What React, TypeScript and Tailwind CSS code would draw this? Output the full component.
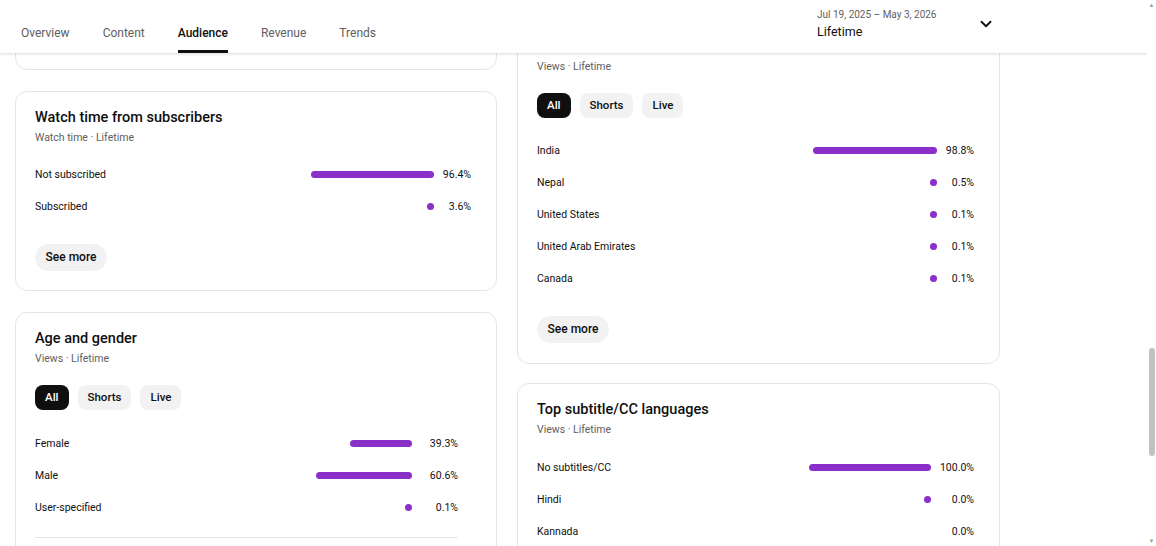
import { ChevronDown } from "lucide-react";

type Row = { label: string; value: string; bar: number };

const tabs = ["Overview", "Content", "Audience", "Revenue", "Trends"];

function Chips() {
  return (
    <div className="mt-[18px] flex gap-[9px]">
      <span className="flex h-[25px] items-center rounded-lg bg-[#0f0f0f] px-[10px] text-[11.5px] font-medium text-white">All</span>
      <span className="flex h-[25px] items-center rounded-lg bg-[#f2f2f2] px-[10px] text-[11.5px] font-medium text-[#0f0f0f]">Shorts</span>
      <span className="flex h-[25px] items-center rounded-lg bg-[#f2f2f2] px-[10px] text-[11.5px] font-medium text-[#0f0f0f]">Live</span>
    </div>
  );
}

function Rows({ rows, valueWidth }: { rows: Row[]; valueWidth: string }) {
  return (
    <div className="flex flex-col">
      {rows.map((r) => (
        <div key={r.label} className="flex h-[32px] items-center text-[10.5px] text-[#0f0f0f]">
          <span className="flex-1">{r.label}</span>
          <div className="flex w-[170px] justify-end">
            {r.bar > 0 && (
              <div className="h-[7px] rounded-full bg-[#8b2fc9]" style={{ width: r.bar }} />
            )}
          </div>
          <span className={`text-right ${valueWidth}`}>{r.value}</span>
        </div>
      ))}
    </div>
  );
}

function SeeMore() {
  return (
    <button className="mt-[21px] h-[27px] w-[72px] rounded-full bg-[#f2f2f2] text-[12px] font-medium text-[#0f0f0f]">
      See more
    </button>
  );
}

function CardHead({ title, sub }: { title: string; sub: string }) {
  return (
    <>
      <p className="h-[18px] text-[14.5px] font-medium leading-[18px] text-[#0f0f0f]">{title}</p>
      <p className="mt-[3px] text-[10.5px] text-[#606060]">{sub}</p>
    </>
  );
}

export default function App() {
  return (
    <div className="relative flex h-[546px] w-[1156px] overflow-hidden bg-white font-['Roboto',sans-serif]">
      <div className="relative flex-1 overflow-hidden">
        {/* header */}
        <div className="absolute inset-x-0 top-0 z-10 flex h-[53px] items-end bg-white shadow-[0_1px_3px_rgba(0,0,0,0.15)]">
          <nav className="ml-[21px] flex gap-[33px]">
            {tabs.map((t) => (
              <div
                key={t}
                className={`flex h-[40px] items-center border-b-[3px] pt-[3px] text-[12px] ${
                  t === "Audience" ? "border-[#0f0f0f] font-medium text-[#0f0f0f]" : "border-transparent text-[#606060]"
                }`}
              >
                {t}
              </div>
            ))}
          </nav>
          <div className="absolute left-[817px] top-[8px] flex items-center">
            <div className="w-[160px]">
              <p className="text-[10px] leading-[14px] text-[#606060]">Jul 19, 2025 – May 3, 2026</p>
              <p className="mt-[1px] text-[12.5px] leading-[17px] text-[#0f0f0f]">Lifetime</p>
            </div>
            <ChevronDown size={18} strokeWidth={2.4} className="text-[#0f0f0f]" />
          </div>
        </div>

        {/* content */}
        <div className="grid grid-cols-[482px_483px] gap-x-[20px] pl-[15px] pt-[21px]">
          <div className="flex flex-col gap-[21px]">
            <div className="h-[49px] rounded-xl border border-[#e5e5e5]" />

            <div className="h-[200px] rounded-xl border border-[#e5e5e5] pl-[19px] pr-[25px] pt-[17px]">
              <CardHead title="Watch time from subscribers" sub="Watch time · Lifetime" />
              <div className="mt-[13px]">
                <Rows
                  valueWidth="w-[37px]"
                  rows={[
                    { label: "Not subscribed", value: "96.4%", bar: 123 },
                    { label: "Subscribed", value: "3.6%", bar: 7 },
                  ]}
                />
              </div>
              <SeeMore />
            </div>

            <div className="h-[260px] rounded-xl border border-[#e5e5e5] pl-[19px] pr-[38px] pt-[17px]">
              <CardHead title="Age and gender" sub="Views · Lifetime" />
              <Chips />
              <div className="mt-[18px] border-b border-[#e5e5e5] pb-[13px]">
                <Rows
                  valueWidth="w-[46px]"
                  rows={[
                    { label: "Female", value: "39.3%", bar: 62 },
                    { label: "Male", value: "60.6%", bar: 96 },
                    { label: "User-specified", value: "0.1%", bar: 7 },
                  ]}
                />
              </div>
            </div>
          </div>

          <div className="flex flex-col gap-[19px]">
            {/* card scrolled under the header: only its lower part shows */}
            <div className="h-[343px] rounded-xl border border-[#e5e5e5] pl-[19px] pr-[25px] pt-[16px]">
              <CardHead title="" sub="Views · Lifetime" />
              <Chips />
              <div className="mt-[17px]">
                <Rows
                  valueWidth="w-[37px]"
                  rows={[
                    { label: "India", value: "98.8%", bar: 124 },
                    { label: "Nepal", value: "0.5%", bar: 7 },
                    { label: "United States", value: "0.1%", bar: 7 },
                    { label: "United Arab Emirates", value: "0.1%", bar: 7 },
                    { label: "Canada", value: "0.1%", bar: 7 },
                  ]}
                />
              </div>
              <SeeMore />
            </div>

            <div className="h-[200px] rounded-xl border border-[#e5e5e5] pl-[19px] pr-[25px] pt-[17px]">
              <CardHead title="Top subtitle/CC languages" sub="Views · Lifetime" />
              <div className="mt-[14px]">
                <Rows
                  valueWidth="w-[43px]"
                  rows={[
                    { label: "No subtitles/CC", value: "100.0%", bar: 122 },
                    { label: "Hindi", value: "0.0%", bar: 7 },
                    { label: "Kannada", value: "0.0%", bar: 0 },
                  ]}
                />
              </div>
            </div>
          </div>
        </div>
      </div>

      {/* scrollbar */}
      <div className="flex w-[9px] flex-col items-center bg-white">
        <span className="mt-[1px] text-[6px] leading-[8px] text-[#a0a0a0]">▲</span>
        <div className="mt-[339px] h-[108px] w-[6px] rounded-full bg-[#c1c1c1]" />
        <div className="flex-1" />
        <span className="mb-[1px] text-[6px] leading-[8px] text-[#a0a0a0]">▼</span>
      </div>
    </div>
  );
}
